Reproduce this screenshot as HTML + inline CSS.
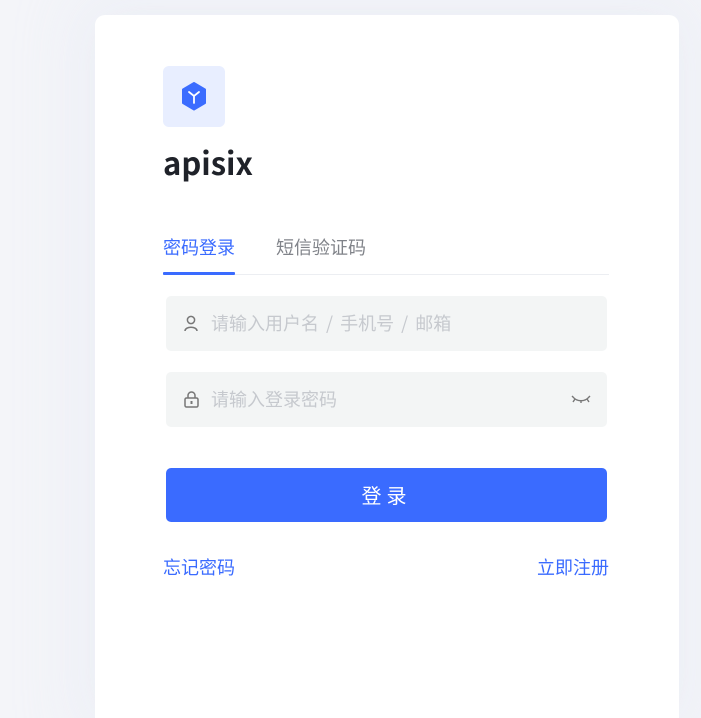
<!DOCTYPE html>
<html style="height:718px;overflow:hidden"><head><meta charset="utf-8"><style>
*{margin:0;padding:0;box-sizing:border-box}
body{width:701px;height:718px;overflow:hidden;background:#f4f5f9;font-family:"Liberation Sans","Noto Sans CJK SC",sans-serif;position:relative}
.card{position:absolute;left:95px;top:15px;width:584px;height:703px;background:#fff;border-radius:10px 10px 0 0;box-shadow:0 0 60px 20px rgba(235,237,245,.8)}
.logo{position:absolute;left:163px;top:66px;width:62px;height:61px;background:#e8eeff;border-radius:6px}
.title{position:absolute;left:163px;top:141px;font-size:31px;font-weight:bold;color:#1f2229;font-family:"Noto Sans CJK SC","Liberation Sans",sans-serif;line-height:42px}
.tab{position:absolute;top:235px;font-size:18px;line-height:24px;font-family:"Noto Sans CJK SC",sans-serif}
.line{position:absolute;left:163px;top:274px;width:446px;height:1px;background:#eceef2}
.ul{position:absolute;left:163px;top:272px;width:72px;height:3px;background:#3a6bff;border-radius:1px}
.inp{position:absolute;left:166px;width:441px;height:55px;background:#f3f5f5;border-radius:5px}
.ph{position:absolute;left:45px;top:15px;font-size:18px;color:#c6c9ce;line-height:24px;font-family:"Noto Sans CJK SC",sans-serif;white-space:nowrap}
.btn{position:absolute;left:166px;top:468px;width:441px;height:54px;background:#3a6bff;border-radius:5px;color:#fff;font-size:20px;text-align:center;line-height:54px;letter-spacing:5px;font-family:"Noto Sans CJK SC",sans-serif}
.lnk{position:absolute;top:555px;font-size:18px;color:#3a6bff;line-height:24px;font-family:"Noto Sans CJK SC",sans-serif}
</style></head><body>
<div class="card"></div>
<div class="logo"><svg width="62" height="61" viewBox="0 0 62 61"><polygon points="31,17 42,23.5 42,37 31,43.5 20,37 20,23.5" fill="#3b6cff" stroke="#3b6cff" stroke-width="2" stroke-linejoin="round"/><path d="M26,26 L31,30 L36,26 M31,30 L31,37" stroke="#fff" stroke-width="1.8" fill="none" stroke-linecap="round"/></svg></div>
<div class="title">apisix</div>
<div class="tab" style="left:163px;color:#3a6bff">密码登录</div>
<div class="tab" style="left:276px;color:#808389">短信验证码</div>
<div class="line"></div><div class="ul"></div>
<div class="inp" style="top:296px"><svg style="position:absolute;left:18px;top:19px" width="14" height="17" viewBox="0 0 14 17"><circle cx="7" cy="5" r="3.6" fill="none" stroke="#777" stroke-width="1.5"/><path d="M1,16 C1,11 13,11 13,16" fill="none" stroke="#777" stroke-width="1.5"/></svg><div class="ph" style="word-spacing:3px">请输入用户名 / 手机号 / 邮箱</div></div>
<div class="inp" style="top:372px"><svg style="position:absolute;left:18px;top:18px" width="15" height="18" viewBox="0 0 15 18"><path d="M4,8 V5.5 A3.5,3.5 0 0 1 11,5.5 V8" fill="none" stroke="#777" stroke-width="1.5"/><rect x="1" y="8" width="13" height="9" rx="1.5" fill="none" stroke="#777" stroke-width="1.5"/><rect x="6.5" y="11" width="2" height="3" fill="#777"/></svg><div class="ph">请输入登录密码</div><svg style="position:absolute;left:405px;top:22px" width="20" height="10" viewBox="0 0 20 10"><path d="M2,3 C6,8 14,8 18,3 M4,5 L2,8 M10,7 V9 M16,5 L18,8 M1,2 L3,4 M19,2 L17,4" fill="none" stroke="#777" stroke-width="1.4"/></svg></div>
<div class="btn">登录</div>
<div class="lnk" style="left:163px">忘记密码</div>
<div class="lnk" style="left:537px">立即注册</div>
</body></html>
